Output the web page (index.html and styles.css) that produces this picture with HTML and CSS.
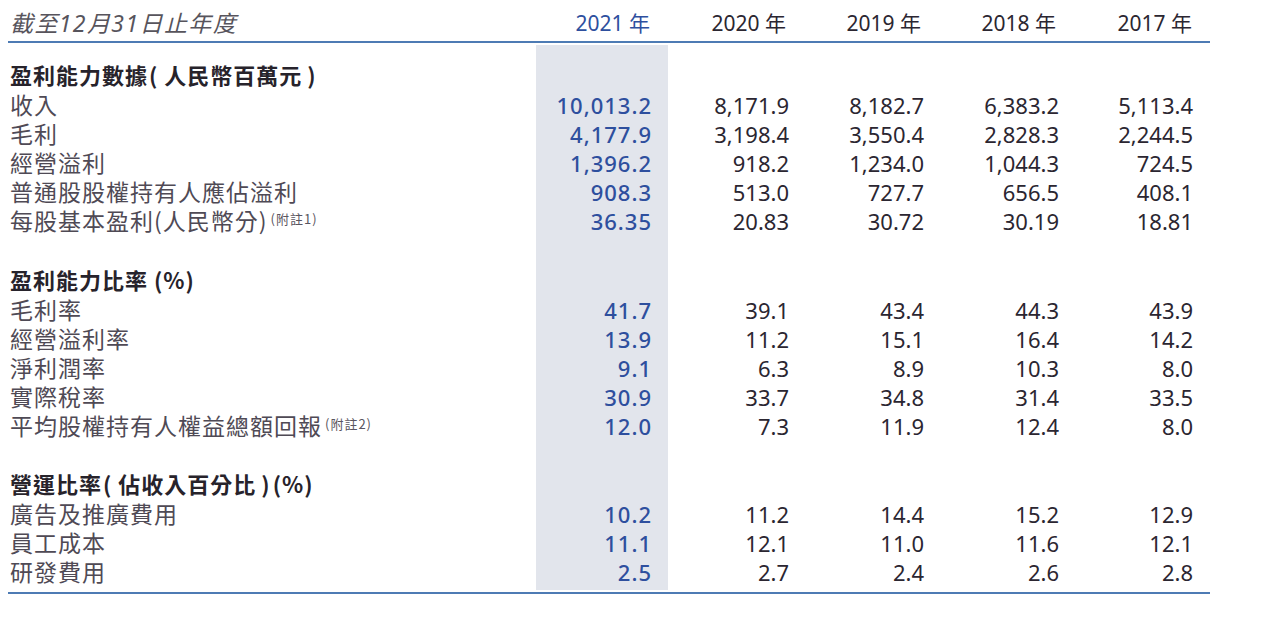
FILE: index.html
```html
<!DOCTYPE html>
<html lang="zh-Hant">
<head>
<meta charset="utf-8">
<title>財務摘要</title>
<link rel="stylesheet" href="styles.css">
</head>
<body>
<div class="report">
  <div class="head">
    <div class="title">截至12月31日止年度</div>
    <div class="yr cur">2021 年</div>
    <div class="yr">2020 年</div>
    <div class="yr">2019 年</div>
    <div class="yr">2018 年</div>
    <div class="yr last">2017 年</div>
  </div>
  <table class="data">
    <colgroup>
      <col class="c-label"><col class="c-cur"><col class="c-yr"><col class="c-yr"><col class="c-yr"><col class="c-last">
    </colgroup>
    <tbody>
      <tr class="gap g1"><td></td><td></td><td></td><td></td><td></td><td></td></tr>
      <tr class="sec s1"><td>盈利能力數據<span class="pl">(</span>人民幣百萬元<span class="pr">)</span></td><td></td><td></td><td></td><td></td><td></td></tr>
      <tr><td>收入</td><td>10,013.2</td><td>8,171.9</td><td>8,182.7</td><td>6,383.2</td><td>5,113.4</td></tr>
      <tr><td>毛利</td><td>4,177.9</td><td>3,198.4</td><td>3,550.4</td><td>2,828.3</td><td>2,244.5</td></tr>
      <tr><td>經營溢利</td><td>1,396.2</td><td>918.2</td><td>1,234.0</td><td>1,044.3</td><td>724.5</td></tr>
      <tr><td>普通股股權持有人應佔溢利</td><td>908.3</td><td>513.0</td><td>727.7</td><td>656.5</td><td>408.1</td></tr>
      <tr><td>每股基本盈利(人民幣分)<span class="note">(附註1)</span></td><td>36.35</td><td>20.83</td><td>30.72</td><td>30.19</td><td>18.81</td></tr>
      <tr class="gap g2"><td></td><td></td><td></td><td></td><td></td><td></td></tr>
      <tr class="sec s2"><td>盈利能力比率 (%)</td><td></td><td></td><td></td><td></td><td></td></tr>
      <tr><td>毛利率</td><td>41.7</td><td>39.1</td><td>43.4</td><td>44.3</td><td>43.9</td></tr>
      <tr><td>經營溢利率</td><td>13.9</td><td>11.2</td><td>15.1</td><td>16.4</td><td>14.2</td></tr>
      <tr><td>淨利潤率</td><td>9.1</td><td>6.3</td><td>8.9</td><td>10.3</td><td>8.0</td></tr>
      <tr><td>實際稅率</td><td>30.9</td><td>33.7</td><td>34.8</td><td>31.4</td><td>33.5</td></tr>
      <tr><td>平均股權持有人權益總額回報<span class="note">(附註2)</span></td><td>12.0</td><td>7.3</td><td>11.9</td><td>12.4</td><td>8.0</td></tr>
      <tr class="gap g3"><td></td><td></td><td></td><td></td><td></td><td></td></tr>
      <tr class="sec s3"><td>營運比率<span class="pl">(</span>佔收入百分比<span class="pr">)</span>(%)</td><td></td><td></td><td></td><td></td><td></td></tr>
      <tr><td>廣告及推廣費用</td><td>10.2</td><td>11.2</td><td>14.4</td><td>15.2</td><td>12.9</td></tr>
      <tr><td>員工成本</td><td>11.1</td><td>12.1</td><td>11.0</td><td>11.6</td><td>12.1</td></tr>
      <tr><td>研發費用</td><td>2.5</td><td>2.7</td><td>2.4</td><td>2.6</td><td>2.8</td></tr>
      <tr class="gap g4"><td></td><td></td><td></td><td></td><td></td><td></td></tr>
    </tbody>
  </table>
</div>
</body>
</html>
```

FILE: styles.css
```css
html, body {
  margin: 0;
  padding: 0;
  background: #ffffff;
}

body {
  font-family: "Noto Sans", "Noto Sans CJK TC", sans-serif;
  color: #2b2631;
}

.report {
  width: 1202px;
  margin-left: 8px;
  border-bottom: 2px solid #4d7bb4;
}

.head {
  display: grid;
  grid-template-columns: 528px 132px 135px 135px 135px 137px;
  align-items: center;
  height: 41px;
  border-bottom: 2px solid #4d7bb4;
}

.title {
  padding-left: 2px;
  padding-top: 2px;
  font-family: "Noto Sans", "Noto Sans CJK TC", sans-serif;
  font-style: italic;
  font-size: 23px;
  letter-spacing: 1.4px;
  color: #57545c;
}

.yr {
  text-align: right;
  padding-right: 17px;
  padding-top: 2px;
  font-size: 21px;
  color: #2b2631;
}

.yr.cur {
  padding-right: 18px;
  color: #2e4f9e;
}

.yr.last {
  padding-right: 18px;
}

.data {
  width: 1202px;
  margin: 2px 0;
  border-collapse: collapse;
  border-spacing: 0;
  table-layout: fixed;
}

.c-label { width: 528px; }
.c-cur { width: 132px; background: #e2e5ec; }
.c-yr { width: 135px; }
.c-last { width: 137px; }

.data td {
  padding: 0 14px 0 0;
  height: 29px;
  line-height: 1;
  vertical-align: middle;
  text-align: right;
  font-size: 22px;
  white-space: nowrap;
}

.data td:first-child {
  padding: 0 0 0 2px;
  text-align: left;
  font-family: "Noto Sans CJK TC", sans-serif;
  font-size: 23px;
  letter-spacing: 1px;
  color: #4f4a55;
}

.data td:nth-child(2) {
  padding-right: 16px;
  color: #2e4f9e;
  letter-spacing: 1px;
  font-weight: 500;
}

.data td:last-child {
  padding-right: 17px;
}

.data tr.sec td:first-child {
  font-size: 22px;
  font-weight: 700;
  letter-spacing: 1px;
  color: #27232b;
}

.data tr.s1 td { height: 32px; }
.data tr.s2 td { height: 32px; }
.data tr.s3 td { height: 33px; }

.pl {
  margin-left: 1px;
  margin-right: 6px;
}

.pr {
  margin-left: 5px;
  margin-right: 2px;
}

.data tr.g1 td { height: 13px; }
.data tr.g2 td { height: 28px; }
.data tr.g3 td { height: 26px; }
.data tr.g4 td { height: 4px; }

.note {
  font-size: 13px;
  letter-spacing: 1px;
  vertical-align: 6px;
  margin-left: 3px;
  color: #5a5560;
}
```
